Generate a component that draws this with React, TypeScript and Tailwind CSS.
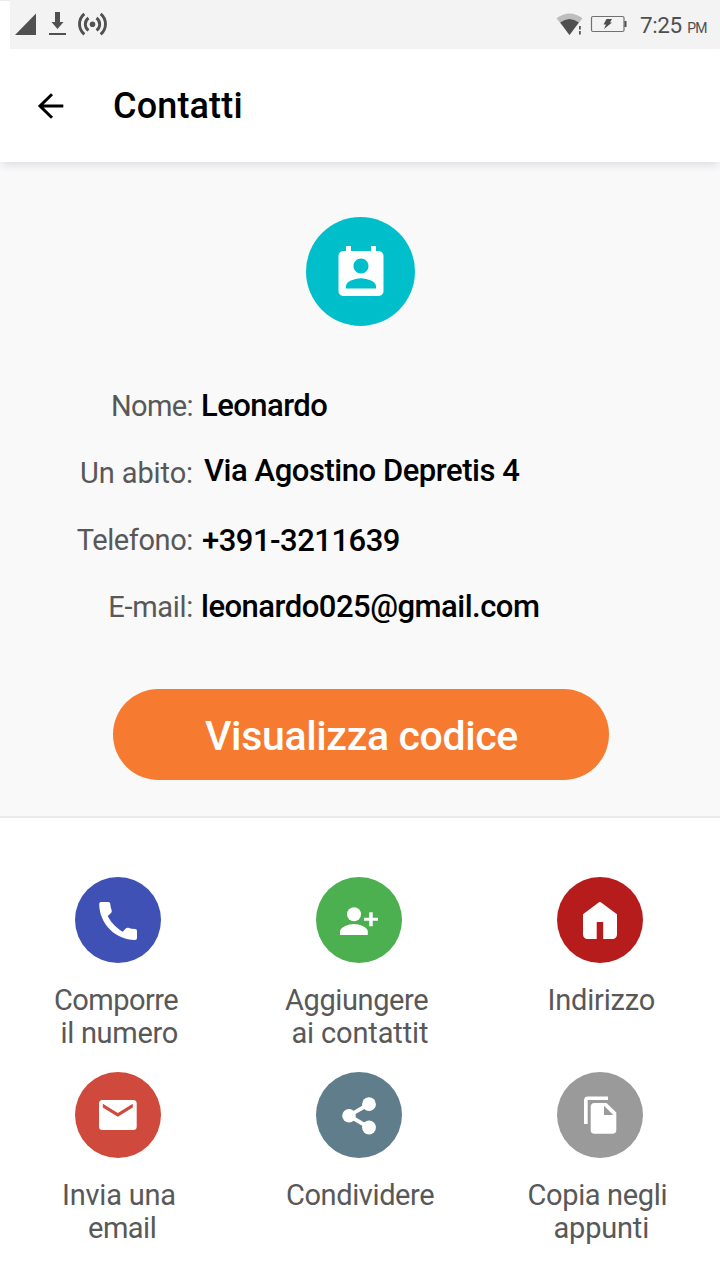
import React from "react";

type Line = { text: string; className: string };
type Action = { color: string; icon: React.ReactNode; lines: Line[] };

const actions: Action[] = [
  {
    color: "bg-[#3f51b5]",
    icon: (
      <path d="M26 25H33.500Q35 25 35.200 26.500Q35.500 30.500 36.700 33.500Q37 35 36.100 35.900L32.700 38.900C36.500 46 41 50.500 47.700 54.800L51 51.300Q52 50.500 53.200 50.800Q56.500 51.900 60.200 52.100Q62 52.300 62 54V61Q62 63 60 63C40.500 63 24.200 46.500 24.200 27Q24.200 25 26 25Z" />
    ),
    lines: [
      { text: "Comporre", className: "pl-[11px] tracking-[-0.55px]" },
      { text: "il numero", className: "pl-[17.5px] tracking-[-0.3px]" },
    ],
  },
  {
    color: "bg-[#4caf50]",
    icon: (
      <>
        <circle cx="38" cy="37.2" r="7" />
        <path d="M24 58v-3.5C24 50 33 47 38 47s13.8 3 13.8 7.500V58z" />
        <path d="M53.200 35.200v5.500h-5.200v3h5.200v5.500h3.500v-5.500h5.300v-3h-5.300v-5.500z" />
      </>
    ),
    lines: [
      { text: "Aggiungere", className: "pl-px tracking-[-0.4px]" },
      { text: "ai contattit", className: "pl-[7.5px] tracking-[-0.15px]" },
    ],
  },
  {
    color: "bg-[#b71c1c]",
    icon: (
      <path d="M42 25.300q.9-.7 1.800 0L60 37.300V57.500a4.500 4.500 0 0 1-4.500 4.500H46.200V45h-6.500v17H30.500a4.500 4.500 0 0 1-4.500-4.500V37.300z" />
    ),
    lines: [{ text: "Indirizzo", className: "pl-[22.5px] tracking-[-0.2px]" }],
  },
  {
    color: "bg-[#cf4a3c]",
    icon: (
      <>
        <rect x="24" y="28" width="37.700" height="30" rx="3.500" />
        <path className="fill-[#cf4a3c]" d="M27.800 31.700 42.800 41l15-9.300v3.700l-15 9.400-15-9.400z" />
      </>
    ),
    lines: [
      { text: "Invia una", className: "pl-[19px] tracking-[-0.2px]" },
      { text: "email", className: "pl-[45px] tracking-[-0.5px]" },
    ],
  },
  {
    color: "bg-[#607d8b]",
    icon: (
      <>
        <path d="M53 32 33 43.700 53 55.500" fill="none" stroke="white" strokeWidth="3.800" />
        <circle cx="33" cy="43.800" r="6.800" />
        <circle cx="53" cy="32.200" r="6.900" />
        <circle cx="53" cy="55.500" r="6.900" />
      </>
    ),
    lines: [{ text: "Condividere", className: "pl-[2px] tracking-[-0.4px]" }],
  },
  {
    color: "bg-[#9a9a9a]",
    icon: (
      <>
        <path d="M51 24.500H31a4 4 0 0 0-4 4V52h3.700V28H51z" />
        <path
          fillRule="evenodd"
          d="M37.500 31H49.500L59.300 40.500V58a3.800 3.800 0 0 1-3.800 3.800H37.500a3.800 3.800 0 0 1-3.800-3.800V34.800a3.800 3.800 0 0 1 3.800-3.800zM47 33.700V43h9.300z"
        />
      </>
    ),
    lines: [
      { text: "Copia negli", className: "pl-[2.5px] tracking-[-0.35px]" },
      { text: "appunti", className: "pl-[28.5px] tracking-[-0.2px]" },
    ],
  },
];

const details = [
  {
    label: "Nome:",
    value: "Leonardo",
    row: "h-[66px]",
    labelClass: "pt-0 tracking-[-0.6px]",
    valueClass: "pl-[8px] pt-0 tracking-[-0.55px]",
  },
  {
    label: "Un abito:",
    value: "Via Agostino Depretis 4",
    row: "h-[67px]",
    labelClass: "pt-px tracking-[-0.1px]",
    valueClass: "pl-[11px] -mt-px tracking-[-0.45px]",
  },
  {
    label: "Telefono:",
    value: "+391-3211639",
    row: "h-[67px]",
    labelClass: "pt-px tracking-[-0.4px]",
    valueClass: "pl-[9px] pt-[2px] tracking-[-0.5px]",
  },
  {
    label: "E-mail:",
    value: "leonardo025@gmail.com",
    row: "h-[67px]",
    labelClass: "pt-px tracking-[-0.3px]",
    valueClass: "pl-[8px] pt-px tracking-[-0.5px]",
  },
];

function StatusBar() {
  return (
    <div className="flex h-[49px]">
      <div className="w-[10px] border-t border-[#ebebeb] bg-white" />
      <div className="flex flex-1 items-start bg-[#f3f3f3] text-[#4f4f4f]">
        <svg className="h-[49px] w-[110px] shrink-0" viewBox="10 0 110 49" fill="#505050">
          <path d="M15 35 36 13.500V35z" />
          <path d="M55 12h5v10h3.500l-6 7-6-7H55zM49 33h17v2H49z" />
          <circle cx="92.500" cy="24.200" r="2.800" />
          <g fill="none" stroke="#505050" strokeWidth="2.900">
            <path d="M88.500 18a7.600 7.600 0 0 0 0 12.400M96.500 18a7.600 7.600 0 0 1 0 12.400" />
            <path d="M84.300 13.800a13.500 13.500 0 0 0 0 20.600M100.700 13.800a13.500 13.500 0 0 1 0 20.600" />
          </g>
        </svg>
        <svg className="ml-auto h-[49px] w-[80px] shrink-0" viewBox="550 0 80 49">
          <path d="M569.500 35 556.500 18.300Q569.500 8.500 582.500 18.300z" fill="#bdbdbd" />
          <path d="M578 26h6v9h-6z" fill="#f3f3f3" />
          <path d="M569.500 35 560.200 22.500Q569.500 15.500 578.800 22.500z" fill="#4f4f4f" />
          <path d="M579.900 26v3.500M579.900 31v3.500" stroke="#4f4f4f" strokeWidth="1.700" />
          <rect x="591.500" y="16.500" width="32.500" height="15" rx="1.500" fill="none" stroke="#717171" strokeWidth="1.200" />
          <path d="M624.500 21h2v6h-2z" fill="#4f4f4f" />
          <path d="M606.500 19 612 19l-2 3.500h2l-8 6.500 2-4.500h-2.500z" fill="#4f4f4f" />
        </svg>
        <div className="w-[90px] whitespace-nowrap pl-[10px] pt-[10px] text-[22.500px] leading-[30px] tracking-[-0.4px]">
          7:25<span className="pl-[5.5px] text-[14px] tracking-[-1px]">PM</span>
        </div>
      </div>
    </div>
  );
}

export default function App() {
  return (
    <main className="flex h-[1280px] w-[720px] flex-col overflow-hidden bg-white font-['Roboto',sans-serif]">
      <StatusBar />
      <header className="z-10 flex h-[113px] items-center bg-white shadow-[0_5px_8px_-2px_rgba(30,40,80,0.13)]">
        <svg className="ml-[37px] h-[28px] w-[28px]" viewBox="37 92 28 28" fill="none" stroke="black" strokeWidth="3">
          <path d="M63.300 106H40M52 94.300 40 106l12 11.700" />
        </svg>
        <h1 className="pl-[48px] text-[36px] font-medium leading-[42px] tracking-[0.15px] text-black">Contatti</h1>
      </header>
      <section className="flex h-[656px] flex-col border-b-2 border-[#ebebeb] bg-[#f9f9f9] pt-[55px]">
        <div className="ml-[306px] size-[109px] rounded-full bg-[#00bfcb]">
          <svg className="size-[109px]" viewBox="0 0 109 109" fill="white">
            <path
              transform="translate(25 26.500) scale(2.500)"
              d="M19 3h-1V1h-2v2H8V1H6v2H5c-1.110 0-2 .9-2 2v14c0 1.100.89 2 2 2h14c1.100 0 2-.9 2-2V5c0-1.100-.9-2-2-2zm-7 3c1.660 0 3 1.340 3 3s-1.340 3-3 3-3-1.340-3-3 1.340-3 3-3zm6 12H6v-1c0-2 4-3.100 6-3.100s6 1.100 6 3.100v1z"
            />
          </svg>
        </div>
        <dl className="mt-[62px] h-[267px]">
          {details.map((d) => (
            <div key={d.label} className={"flex items-start whitespace-nowrap leading-[36px] " + d.row}>
              <dt className={"w-[193px] text-right text-[29px] text-[#585858] " + d.labelClass}>{d.label}</dt>
              <dd className={"text-[31px] font-medium text-black " + d.valueClass}>{d.value}</dd>
            </div>
          ))}
        </dl>
        <button className="mt-[34px] ml-[113px] h-[91px] w-[496px] shrink-0 rounded-full bg-[#f67a30] pl-px pt-[3px] text-[41px] font-medium leading-[48px] tracking-[-0.35px] text-white">
          Visualizza codice
        </button>
      </section>
      <section className="ml-[43px] grid w-[632px] grid-cols-3 gap-x-[91px] pt-[59px]">
        {actions.map((a) => (
          <div key={a.lines[0].text} className="h-[195px]">
            <div className={"ml-[32px] size-[86px] rounded-full " + a.color}>
              <svg className="size-[86px]" viewBox="0 0 86 86" fill="white">
                {a.icon}
              </svg>
            </div>
            <div className="flex flex-col -space-y-px pt-[20px] text-[29px] leading-[34px] text-[#585858]">
              {a.lines.map((l) => (
                <div key={l.text} className={"whitespace-nowrap " + l.className}>
                  {l.text}
                </div>
              ))}
            </div>
          </div>
        ))}
      </section>
    </main>
  );
}
